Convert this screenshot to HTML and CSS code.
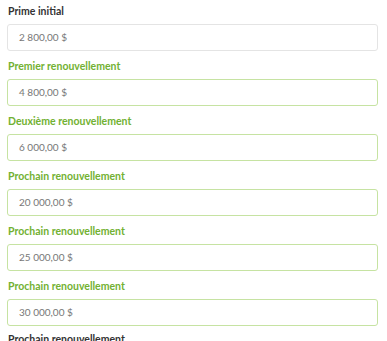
FILE: index.html
```html
<!DOCTYPE html>
<html lang="fr">
<head>
  <meta charset="UTF-8" />
  <title>Renouvellements</title>
  <link rel="stylesheet" href="styles.css">
</head>
<body>
  <div class="form">
    <div class="field">
      <label>Prime initial</label>
      <div class="input">2 800,00 $</div>
    </div>
    <div class="renewals">
      <div class="field green">
        <label>Premier renouvellement</label>
        <div class="input">4 800,00 $</div>
      </div>
      <div class="field green">
        <label>Deuxième renouvellement</label>
        <div class="input">6 000,00 $</div>
      </div>
      <div class="field green">
        <label>Prochain renouvellement</label>
        <div class="input">20 000,00 $</div>
      </div>
      <div class="field green">
        <label>Prochain renouvellement</label>
        <div class="input">25 000,00 $</div>
      </div>
      <div class="field green">
        <label>Prochain renouvellement</label>
        <div class="input">30 000,00 $</div>
      </div>
    </div>
    <div class="field">
      <label>Prochain renouvellement</label>
      <div class="input">35 000,00 $</div>
    </div>
  </div>
</body>
</html>
```

FILE: styles.css
```css
body {
  margin: 0;
  padding: 5px 9px 0 7px;
  background-color: #fff;
  color: #333;
  font-family: 'Lato', sans-serif;
}

.field {
  margin-bottom: 9px;
}

.renewals {
  margin-bottom: -2px;
}

label {
  display: block;
  font-size: 10.5px;
  font-weight: 700;
  line-height: 13px;
  padding-left: 1px;
  margin-bottom: 6px;
}

.input {
  height: 25px;
  line-height: 25px;
  border: 1px solid #e4e4e4;
  border-radius: 3px;
  padding: 0 11px;
  font-size: 10px;
  color: #777;
}

.green label {
  color: #72b132;
}

.green .input {
  border-color: #c6e3a2;
}
```
